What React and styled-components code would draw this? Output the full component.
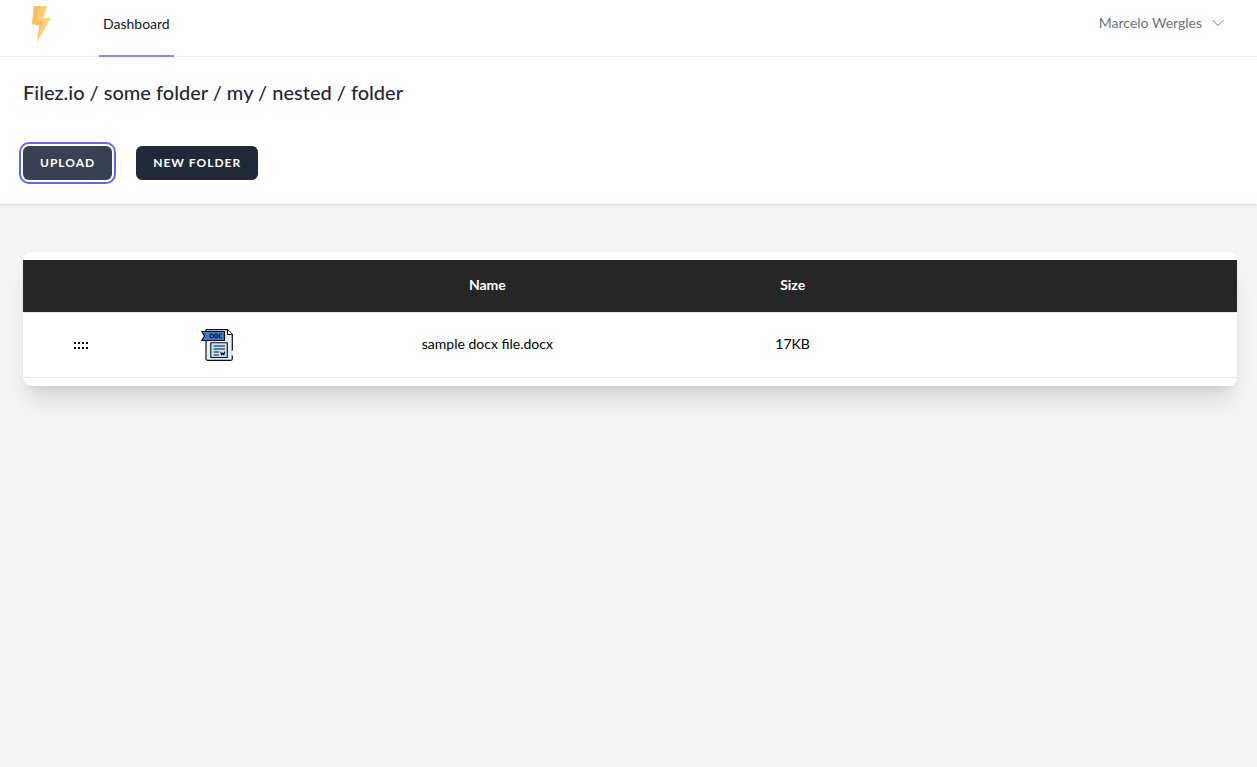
import React from "react";
import styled, { createGlobalStyle } from "styled-components";

const GlobalStyle = createGlobalStyle`
  *, *::before, *::after { box-sizing: border-box; }
  body {
    margin: 0;
    background: #f3f4f6;
    color: #000;
    font-family: Lato, "Open Sans", "Liberation Sans", sans-serif;
    font-size: 14px;
    line-height: 20px;
  }
`;

const Nav = styled.nav`
  display: flex;
  align-items: stretch;
  justify-content: space-between;
  height: 57px;
  padding: 0 32px;
  background: #fff;
  box-shadow: inset 0 -1px #f0f0f2;
`;

const NavGroup = styled.div`
  display: flex;
  gap: 48px;
`;

const LogoLink = styled.a`
  display: block;
  padding-top: 6px;
  svg { display: block; }
`;

const NavLink = styled.a`
  padding: 14px 4px 0;
  border-bottom: 2px solid #818cf8;
  color: #111827;
  text-decoration: none;
`;

const UserButton = styled.button`
  display: flex;
  align-items: center;
  gap: 10px;
  padding: 0 1px 11px;
  border: 0;
  background: none;
  color: #6b7280;
  font: inherit;
  cursor: pointer;
`;

const Header = styled.header`
  padding: 24px 23px;
  background: #fff;
  box-shadow: 0 1px 3px rgba(0, 0, 0, 0.1), 0 1px 2px -1px rgba(0, 0, 0, 0.1);
`;

const Breadcrumb = styled.h1`
  margin: 0 0 42px;
  color: #1f2937;
  font-size: 20px;
  font-weight: 500;
  line-height: 23px;
`;

const Actions = styled.div`
  display: flex;
  gap: 24px;
`;

const ActionButton = styled.button`
  height: 34px;
  padding: 0 16px;
  border: 1px solid transparent;
  border-radius: 6px;
  outline: none;
  background: ${(p) => (p.$active ? "#374151" : "#1f2937")};
  box-shadow: ${(p) => (p.$active ? "0 0 0 2px #fff, 0 0 0 4px #6366f1" : "none")};
  color: #fff;
  font: 700 12px/16px Lato, sans-serif;
  letter-spacing: 1px;
  text-transform: uppercase;
  cursor: pointer;
`;

const Main = styled.main`
  padding: 48px 20px 48px 23px;
`;

const Card = styled.section`
  padding: 8px 0;
  border-radius: 8px;
  background: #fff;
  box-shadow: 0 20px 25px -5px rgba(0, 0, 0, 0.1), 0 8px 10px -6px rgba(0, 0, 0, 0.1);
`;

const Table = styled.table`
  width: 100%;
  table-layout: fixed;
  border-collapse: separate;
  border-spacing: 0;
  text-align: center;
`;

const Column = styled.col`
  width: ${(p) => p.$share};
`;

const HeadCell = styled.th`
  height: 53px;
  padding: 0 16px 2px;
  border-bottom: 1px solid #e5e7eb;
  background: #262626;
  color: #fff;
  font-weight: 700;
`;

const Cell = styled.td`
  height: 65px;
  padding: 0 16px;
  border-bottom: 1px solid #e5e7eb;
  svg { display: block; margin: 0 auto; }
`;

const TextCell = styled(Cell)`
  padding-bottom: 2px;
`;

const Bolt = () => (
  <svg width="19" height="36" viewBox="0 0 19 36" aria-hidden="true">
    <path d="M2 0H15L11.5 12H19L5 36L7.5 19.5L0 18Z" fill="#ffd07a" />
    <path d="M2 0H8L5 14.5L10.5 15.5L5 36L7.5 19.5L0 18Z" fill="#fdbb62" />
  </svg>
);

const Chevron = () => (
  <svg width="12" height="8" viewBox="0 0 12 8" fill="none" stroke="#6b7280" strokeLinecap="round" strokeLinejoin="round" aria-hidden="true">
    <path d="M1 1.5L6 6.5L11 1.5" />
  </svg>
);

const Grip = () => (
  <svg width="14" height="7" viewBox="0 0 14 7" shapeRendering="crispEdges" aria-hidden="true">
    {[0, 4, 8, 12].map((x) => (
      <path key={x} d={`M${x} 0h2v2h-2zM${x} 5h2v2h-2z`} />
    ))}
  </svg>
);

const DocIcon = () => (
  <svg width="32" height="32" viewBox="0 0 32 32" fill="none" stroke="#0b0f16" strokeLinejoin="round" strokeLinecap="round" aria-hidden="true">
    <path d="M5 .7H26.5L31.3 5.5V29.8Q31.3 31.3 29.8 31.3H6.5Q5 31.3 5 29.8Z" fill="#eeeef2" strokeWidth="1.2" />
    <path d="M26.5.7V5.5H31.3" fill="#fff" strokeWidth="1.1" />
    <path d="M31.3 22.5V25.5" stroke="#fff" strokeWidth="1.8" />
    <path d="M.7 2.5H23.5V11.5H.7L3.5 7Z" fill="#3d7bd0" strokeWidth="1.2" />
    <path d="M9.5 5.2H11Q12.5 5.2 12.5 7T11 8.8H9.5ZM14.2 5.2H16.4V8.8H14.2ZM20.3 5.2H18.2V8.8H20.3" strokeWidth="1" />
    <rect x="9.8" y="13.7" width="16.5" height="14.8" fill="#bfe9fd" strokeWidth="1.1" />
    <path d="M13 17H23.5M13 20H23.5M13 23H17.5M13 26H17.5" strokeWidth="1" />
    <path d="M19.8 23L20.5 26L21.7 24L22.8 26L23.6 23" strokeWidth="1.1" />
  </svg>
);

const columns = ["9.5%", "13%", "31.5%", "18.8%", "27.2%"];
const files = [{ name: "sample docx file.docx", size: "17KB" }];

export default function App() {
  return (
    <>
      <GlobalStyle />
      <Nav>
        <NavGroup>
          <LogoLink href="#" aria-label="Home"><Bolt /></LogoLink>
          <NavLink href="#" aria-current="page">Dashboard</NavLink>
        </NavGroup>
        <UserButton type="button">
          Marcelo Wergles
          <Chevron />
        </UserButton>
      </Nav>
      <Header>
        <Breadcrumb>Filez.io / some folder / my / nested / folder</Breadcrumb>
        <Actions>
          <ActionButton type="button" $active>Upload</ActionButton>
          <ActionButton type="button">New folder</ActionButton>
        </Actions>
      </Header>
      <Main>
        <Card>
          <Table>
            <colgroup>
              {columns.map((share, i) => <Column key={i} $share={share} />)}
            </colgroup>
            <thead>
              <tr>
                <HeadCell aria-label="Move" />
                <HeadCell aria-label="Type" />
                <HeadCell scope="col">Name</HeadCell>
                <HeadCell scope="col">Size</HeadCell>
                <HeadCell aria-label="Actions" />
              </tr>
            </thead>
            <tbody>
              {files.map((file) => (
                <tr key={file.name}>
                  <Cell><Grip /></Cell>
                  <Cell><DocIcon /></Cell>
                  <TextCell>{file.name}</TextCell>
                  <TextCell>{file.size}</TextCell>
                  <Cell />
                </tr>
              ))}
            </tbody>
          </Table>
        </Card>
      </Main>
    </>
  );
}
